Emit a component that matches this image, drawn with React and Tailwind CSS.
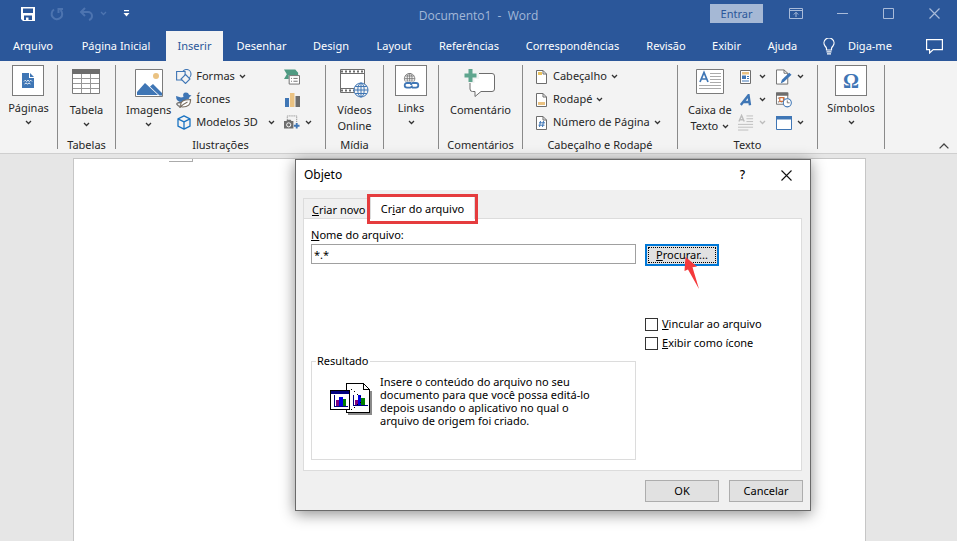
import React from 'react';

const Chevron = ({ className = 'text-[#333]' }) => (
  <svg width="7" height="5" viewBox="0 0 7 5" className={`shrink-0 ${className}`} fill="none" stroke="currentColor" strokeWidth="1.3">
    <path d="M1 1l2.5 2.5L6 1" />
  </svg>
);

/* ---------- title bar icons ---------- */

const SaveIcon = () => (
  <svg width="14" height="14" viewBox="0 0 14 14">
    <path d="M0 0h14v14H2l-2-2z" fill="#fff" />
    <path d="M2 1.500h10V6H2zM3 8.500h8V13H3z" fill="#2b579a" />
    <path d="M5 10.500h2.500V13H5z" fill="#fff" />
  </svg>
);

const RepeatIcon = () => (
  <svg width="14" height="14" viewBox="0 0 14 14" fill="none" stroke="#4d74b0" strokeWidth="2">
    <path d="M4 2.500A5.300 5.300 0 1 0 10.500 3" />
    <path d="M8.500 6V2H13" />
  </svg>
);

const UndoIcon = () => (
  <svg width="15" height="14" viewBox="0 0 15 14" fill="none" stroke="#4d74b0" strokeWidth="2">
    <path d="M6 1L2 5l4 4M2 5h7a4 4 0 0 1 4 4q0 3-3 4" />
  </svg>
);

const CustomizeIcon = () => (
  <svg width="7" height="7" viewBox="0 0 7 7" fill="#fff">
    <path d="M1 0h5v1.200H1zM0.500 3h6L3.500 6.500z" />
  </svg>
);

const RibbonOptionsIcon = () => (
  <svg width="14" height="11" viewBox="0 0 14 11" fill="none" stroke="#a9bbd9">
    <path d="M.5.5h13v10H.5zM.5 2.500h13M7 9V4.500M4.800 6.500L7 4.300l2.200 2.200" />
  </svg>
);

const BulbIcon = () => (
  <svg width="12" height="17" viewBox="0 0 12 17" fill="none" stroke="#fff" strokeWidth="1.200">
    <path d="M3.500 12V10.500Q3.500 9.500 2 8A5 5 0 1 1 10 8Q8.500 9.500 8.500 10.500V12zM3.500 13.800h5M4 15.800h4" />
  </svg>
);

const CommentIcon = () => (
  <svg width="17" height="15" viewBox="0 0 17 15" fill="none" stroke="#fff" strokeWidth="1.200">
    <path d="M.6.6h15.800v10H7.200L3.600 14v-3.400h-3z" />
  </svg>
);

/* ---------- ribbon icons ---------- */

const PagesIcon = () => (
  <svg width="12" height="15" viewBox="0 0 12 15">
    <path d="M0 0h7v5h5v10H0z" fill="#3f76b5" />
    <path d="M8 0l4 4H8z" fill="#3f76b5" />
    <path d="M2 8.500l1.300-1.300 1.300 1.300 1.400-1.300 1.400 1.300 1.300-1.300L10 8.500M2.500 11l1.500-1 1.500 1L7 10l1.500 1" fill="none" stroke="#fff" strokeWidth=".9" />
  </svg>
);

const TableIcon = () => (
  <svg width="28" height="25" viewBox="0 0 28 25">
    <path d="M.5.5h27v24H.5z" fill="#fff" stroke="#7b7b7b" />
    <path d="M0 0h28v5H0z" fill="#6d6d6d" />
    <path d="M1 9.500h26M1 14.500h26M1 19.500h26M9.500 5v19M18.500 5v19" stroke="#979797" />
  </svg>
);

const PicturesIcon = () => (
  <svg width="28" height="28" viewBox="0 0 28 28">
    <path d="M.5.5h27v27H.5z" fill="#fff" stroke="#7b7b7b" />
    <circle cx="21" cy="7" r="3" fill="#eac282" />
    <path d="M2 26v-3l8-9 13 12zM15 17.500l3-2.500 9 9v2.500h-2.500z" fill="#3f76b5" />
  </svg>
);

const ShapesIcon = () => (
  <svg width="16" height="15" viewBox="0 0 16 15" fill="#f3f3f3" stroke="#3f76b5" strokeWidth="1.100">
    <circle cx="10.500" cy="5" r="4.500" />
    <path d="M.6 2.500h8.500v8.500H.6z" />
    <path d="M9.500 5.500l4.500 4.500-4.500 4.500L5 10z" />
  </svg>
);

const BirdIcon = () => (
  <svg width="16" height="16" viewBox="0 0 16 16">
    <path d="M0 4l5 1.500L7.500 5Q6 .5 10 .5q2.500 0 3 2.300l2.500.700L13.500 5Q13.500 7 11 7.500L6 10Q0 10 0 4z" fill="#3f76b5" />
    <path d="M1 12.500q-1-2 4-2M1 12.500q1 2 4 2" fill="none" stroke="#6d6d6d" strokeWidth="1.300" />
    <path d="M5 14.500Q3 7.500 14.500 7.500 15 15 6.500 15zM3.500 16Q7 12 11.500 10" fill="#fff" stroke="#7a6f62" strokeWidth="1.200" />
  </svg>
);

const CubeIcon = () => (
  <svg width="14" height="15" viewBox="0 0 14 15" fill="none" stroke="#1a73c2" strokeWidth="1.300" strokeLinejoin="round">
    <path d="M7 .8l6 3v7.400l-6 3-6-3V3.800zM1 3.800l6 3 6-3M7 6.800v7.400" />
  </svg>
);

const SmartArtIcon = () => (
  <svg width="17" height="16" viewBox="0 0 17 16">
    <path d="M0 0h12l3 3.500V6H5v4H0l3-5z" fill="#4f9a82" />
    <path d="M5.500 6.500h11v9h-11z" fill="#fff" stroke="#6d6d6d" />
    <path d="M7.500 9.500h1M10 9.500h4.500M7.500 12.500h1M10 12.500h4.500" stroke="#6d6d6d" />
  </svg>
);

const ChartIcon = () => (
  <svg width="15" height="14" viewBox="0 0 15 14">
    <path d="M0 5h4v9H0z" fill="#3f76b5" />
    <path d="M5 0h4.500v14H5z" fill="#eac282" />
    <path d="M10.500 3H15v11h-4.500z" fill="#6d6d6d" />
  </svg>
);

const ScreenshotIcon = () => (
  <svg width="17" height="15" viewBox="0 0 17 15">
    <path d="M3.500 5V.5h10V8" fill="none" stroke="#777" strokeDasharray="1 1" />
    <path d="M0 6h2.500l1-1.500h3.500L8 6h2v8H0z" fill="#6d6d6d" />
    <circle cx="5" cy="10" r="2.200" fill="#6d6d6d" stroke="#fff" />
    <path d="M13.500 8v6M10.500 11h6" stroke="#3f76b5" strokeWidth="2" />
  </svg>
);

const Globe = ({ color }) => (
  <g fill="none" stroke={color}>
    <circle cx="7.500" cy="7.500" r="7" fill="#f3f3f3" />
    <ellipse cx="7.500" cy="7.500" rx="3.200" ry="7" />
    <path d="M.5 7.500h14M7.500.5v14M1.700 4h11.600M1.700 11h11.600" />
  </g>
);

const VideoIcon = () => (
  <svg width="29" height="29" viewBox="0 0 29 29">
    <path d="M.5.5h24v23H.5z" fill="#fff" stroke="#6d6d6d" />
    <path d="M1 2.500h23M1 21.500h23" stroke="#6d6d6d" strokeWidth="2" strokeDasharray="2 2" />
    <path d="M0 4.500h25M0 19.500h25" stroke="#6d6d6d" />
    <g transform="translate(13.500 13.500)"><Globe color="#3f76b5" /></g>
  </svg>
);

const LinksIcon = () => (
  <svg width="17" height="16" viewBox="0 0 17 16">
    <g transform="translate(1 0) scale(.75)"><Globe color="#6d6d6d" /></g>
    <path d="M1 8.500h16v7.500H1z" fill="#fff" />
    <g fill="none" stroke="#3f76b5" strokeWidth="1.800">
      <path d="M8 10H4a2.300 2.300 0 0 0 0 4.600h3q2 0 2-2" />
      <path d="M9 14.600h4a2.300 2.300 0 0 0 0-4.600h-3q-2 0-2 2" />
    </g>
  </svg>
);

const NewCommentIcon = () => (
  <svg width="32" height="29" viewBox="0 0 32 29">
    <path d="M3 4.500h25q2.500 0 2.500 2.500v13q0 2.500-2.500 2.500H17L11 27.500v-5H8.500Q6 22.500 6 20V4.500z" fill="#fff" stroke="#6d6d6d" />
    <path d="M7 0v14M0 6.500h15" stroke="#f3f3f3" strokeWidth="7" />
    <path d="M6.500 0v13M.5 6.500h12" stroke="#5fa58e" strokeWidth="4" />
  </svg>
);

const DocIcon = ({ children }) => (
  <svg width="11" height="14" viewBox="0 0 11 14">
    <path d="M.5.5H7L10.500 4v9.500H.5z" fill="#fff" stroke="#6d6d6d" />
    <path d="M7 .5V4h3.500" fill="none" stroke="#6d6d6d" />
    {children}
  </svg>
);

const TextBoxIcon = () => (
  <svg width="28" height="25" viewBox="0 0 28 25">
    <path d="M.5.5h27v24H.5z" fill="#fff" stroke="#7b7b7b" />
    <path d="M4 13L8 3.500 12 13M5.500 10h5" fill="none" stroke="#3f76b5" strokeWidth="1.700" />
    <path d="M14 4.500h11M14 7.500h11M14 10.500h11M14 13.500h11M3 16.500h22M3 19.500h22" stroke="#ababab" />
  </svg>
);

const QuickPartsIcon = () => (
  <svg width="11" height="14" viewBox="0 0 11 14">
    <path d="M.5.5h10v13H.5z" fill="#fff" stroke="#6d6d6d" />
    <path d="M2 2h7v2.500H2z" fill="#eac282" />
    <path d="M2 5.500h4v3.500H2z" fill="#3f76b5" />
    <path d="M7 6.500h2M7 8.500h2M2 11h7" stroke="#3f76b5" />
  </svg>
);

const WordArtIcon = () => (
  <svg width="12" height="12" viewBox="0 0 12 12" fill="none" stroke="#3f76b5" strokeWidth="2.400">
    <path d="M.8 11L8.500 1.200l1.500 10M3.500 8h6" />
  </svg>
);

const DropCapIcon = () => (
  <svg width="17" height="17" viewBox="0 0 17 17" fill="none" stroke="#bdbdbd">
    <path d="M1 7.500L3.800 1l2.800 6.500M2 5.500h3.600" strokeWidth="1.500" />
    <path d="M9 1.500h7M9 4.500h7M9 7.500h7M0 10.500h16M0 13.500h16M0 16.500h11" />
  </svg>
);

const SignatureIcon = () => (
  <svg width="17" height="16" viewBox="0 0 17 16">
    <path d="M.5.500h8L12.500 4v11.500H.5z" fill="#fff" stroke="#6d6d6d" />
    <path d="M8.500.5V4h4" fill="none" stroke="#6d6d6d" />
    <path d="M5 15l1.300-4L14 3.500l2.500 2L8.500 13z" fill="#3f76b5" />
  </svg>
);

const DateIcon = () => (
  <svg width="17" height="16" viewBox="0 0 17 16">
    <path d="M.5.5h12v12H.5z" fill="#fff" stroke="#6d6d6d" />
    <path d="M0 0h13v3.500H0z" fill="#6d6d6d" />
    <path d="M2 6h9M2 10h6" stroke="#888" strokeWidth="1.500" strokeDasharray="1.500 1.500" />
    <path d="M4 5.500h4v4H4z" fill="#fff" stroke="#d2703b" strokeWidth="1.300" />
    <circle cx="12" cy="11" r="4.300" fill="#fff" stroke="#3f76b5" strokeWidth="1.100" />
    <path d="M12 8.500V11h2.500" fill="none" stroke="#6d6d6d" />
  </svg>
);

const ObjectIcon = () => (
  <svg width="16" height="14" viewBox="0 0 16 14">
    <path d="M.5.5h15v13H.5z" fill="#fff" stroke="#3f76b5" />
    <path d="M0 0h16v3.500H0z" fill="#3f76b5" />
  </svg>
);

const EmbedIcon = () => (
  <svg width="42" height="32" viewBox="0 0 42 32" shapeRendering="crispEdges">
    <path d="M18 31h23V8" fill="none" stroke="#8a8a8a" strokeWidth="2" />
    <path d="M16.500.5h17l6 6v23h-23z" fill="#fff" stroke="#000" />
    <path d="M33.500.5v6h6" fill="none" stroke="#000" />
    <path d="M23.500 12v10.500h14" fill="none" stroke="#000080" />
    <path d="M25 17h3v5h-3z" fill="#800080" />
    <path d="M28 12h3v10h-3z" fill="#0000e0" />
    <path d="M31 15h4v7h-4z" fill="#008000" />
    <path d="M21 6l10 8M21 27l10-8" stroke="#000" strokeDasharray="1 3" />
    <path d="M.5 7.500h19v19H.5z" fill="#fff" stroke="#000" />
    <path d="M1 8h18v2.500H1z" fill="#000080" />
    <path d="M4.500 12v11.500h13" fill="none" stroke="#000080" />
    <path d="M6 17h3v6H6z" fill="#800080" />
    <path d="M9 14h4v9H9z" fill="#0000e0" />
    <path d="M13 16h3v7h-3z" fill="#008000" />
  </svg>
);

/* ---------- ribbon building blocks ---------- */

const Group = ({ label, width, children }) => (
  <section className={`flex shrink-0 flex-col border-r border-[#8a8a8a] ${width}`}>
    <div className="flex flex-1 justify-center">{children}</div>
    {label && <h2 className="-mb-1 h-4 text-center leading-4 whitespace-nowrap">{label}</h2>}
  </section>
);

const FramedButton = ({ label, children }) => (
  <button className="flex flex-col items-center">
    <span className="flex h-[31px] w-8 items-center justify-center border border-[#7b7b7b] bg-white">{children}</span>
    <span className="mt-1 mb-1 leading-4">{label}</span>
    <Chevron />
  </button>
);

const LargeButton = ({ label, more, children }) => (
  <button className="flex flex-col items-center pt-1">
    <span className="flex h-8 items-start">{children}</span>
    <span className="mt-px text-center leading-4 whitespace-nowrap">{label}</span>
    {more && <Chevron className="mt-1 text-[#333]" />}
  </button>
);

const SmallButton = ({ icon, label, more = true, dim }) => (
  <button className="flex h-[23px] items-center gap-1 whitespace-nowrap" aria-label={label ? undefined : 'Opção'}>
    <span className="flex w-4 justify-center">{icon}</span>
    {label}
    {more && <Chevron className={label ? 'text-[#333]' : dim ? 'ml-px text-[#bdbdbd]' : 'ml-px text-[#333]'} />}
  </button>
);

const tabs = [
  { label: 'Arquivo', width: 'w-[66px]' },
  { label: 'Página Inicial', width: 'w-[100px]' },
  { label: 'Inserir', width: 'w-[57px]', active: true },
  { label: 'Desenhar', width: 'w-[77px]' },
  { label: 'Design', width: 'w-[62px]' },
  { label: 'Layout', width: 'w-16' },
  { label: 'Referências', width: 'w-[86px]' },
  { label: 'Correspondências', width: 'w-[121px]' },
  { label: 'Revisão', width: 'w-[66px]' },
  { label: 'Exibir', width: 'w-[55px]' },
  { label: 'Ajuda', width: 'w-[57px]' },
];

const TitleBar = () => (
  <div className="grid h-[31px] grid-cols-[1fr_auto_1fr] items-center">
    <div className="flex items-center pb-1 pl-[21px]">
      <button aria-label="Salvar"><SaveIcon /></button>
      <button className="ml-[15px]" aria-label="Repetir"><RepeatIcon /></button>
      <button className="ml-[15px] flex items-center gap-[6px]" aria-label="Desfazer">
        <UndoIcon />
        <Chevron className="text-[#4d74b0]" />
      </button>
      <button className="ml-4" aria-label="Personalizar"><CustomizeIcon /></button>
    </div>
    <h1 className="font-['Open_Sans',sans-serif] text-[12px] whitespace-pre text-[#a3b7d8]">Documento1  -  Word</h1>
    <div className="flex items-center justify-end pr-[17px] pb-1">
      <button className="h-[19px] w-[53px] bg-[#a5b8d5] pt-0.5 text-[#2b579a]">Entrar</button>
      <button className="ml-[26px]" aria-label="Opções da faixa"><RibbonOptionsIcon /></button>
      <button className="ml-[34px]" aria-label="Minimizar">
        <svg width="11" height="11" viewBox="0 0 11 11" stroke="#a9bbd9"><path d="M0 5.500h11" /></svg>
      </button>
      <button className="ml-[35px]" aria-label="Maximizar">
        <svg width="11" height="11" viewBox="0 0 11 11" fill="none" stroke="#a9bbd9"><path d="M.5.5h10v10H.5z" /></svg>
      </button>
      <button className="ml-[35px]" aria-label="Fechar">
        <svg width="11" height="11" viewBox="0 0 11 11" stroke="#a9bbd9" strokeWidth="1.200"><path d="M.5.5l10 10M10.500.5l-10 10" /></svg>
      </button>
    </div>
  </div>
);

const TabStrip = () => (
  <nav className="flex h-[30px] items-stretch text-white">
    {tabs.map((tab) => (
      <button
        key={tab.label}
        className={`shrink-0 whitespace-nowrap ${tab.width} ${tab.active ? 'bg-[#f3f3f3] text-[#2b579a]' : ''}`}
      >
        {tab.label}
      </button>
    ))}
    <button className="ml-3 flex items-center gap-[13px]"><BulbIcon />Diga-me</button>
    <button className="ml-auto pr-[14px]" aria-label="Comentários"><CommentIcon /></button>
  </nav>
);

const Ribbon = () => (
  <div className="flex h-[93px] border-b border-[#cfcfcf] bg-[#f3f3f3] pt-1 pb-1 text-[#262626]">
    <Group width="w-[58px]"><FramedButton label="Páginas"><PagesIcon /></FramedButton></Group>
    <Group label="Tabelas" width="w-[58px]"><LargeButton label="Tabela" more><TableIcon /></LargeButton></Group>
    <Group label="Ilustrações" width="w-[210px]">
      <div className="flex w-full pl-[10px]">
        <LargeButton label="Imagens" more><PicturesIcon /></LargeButton>
        <div className="ml-[5px] w-[108px]">
          <SmallButton icon={<ShapesIcon />} label="Formas" />
          <SmallButton icon={<BirdIcon />} label="Ícones" more={false} />
          <button className="flex h-[23px] w-[99px] items-center gap-1 whitespace-nowrap">
            <span className="flex w-4 justify-center"><CubeIcon /></span>
            Modelos 3D
            <Chevron className="ml-auto text-[#333]" />
          </button>
        </div>
        <div>
          <SmallButton icon={<SmartArtIcon />} more={false} />
          <SmallButton icon={<ChartIcon />} more={false} />
          <SmallButton icon={<ScreenshotIcon />} />
        </div>
      </div>
    </Group>
    <Group label="Mídia" width="w-[58px]"><LargeButton label={<>Vídeos<br />Online</>}><VideoIcon /></LargeButton></Group>
    <Group width="w-[55px]"><FramedButton label="Links"><LinksIcon /></FramedButton></Group>
    <Group label="Comentários" width="w-[84px]"><LargeButton label="Comentário"><NewCommentIcon /></LargeButton></Group>
    <Group label="Cabeçalho e Rodapé" width="w-[155px]">
      <div className="w-full pl-[10px]">
        <SmallButton icon={<DocIcon><path d="M2 2h4v3H2z" fill="#eac25c" /></DocIcon>} label="Cabeçalho" />
        <SmallButton icon={<DocIcon><path d="M2 9h7v3H2z" fill="#eac282" /></DocIcon>} label="Rodapé" />
        <SmallButton icon={<DocIcon><path d="M4.500 5l-1 6M7.500 5l-1 6M3 6.800h6M2.500 9.200h6" stroke="#3f76b5" /></DocIcon>} label="Número de Página" />
      </div>
    </Group>
    <Group label="Texto" width="w-[140px]">
      <div className="flex w-full pl-[10px]">
        <LargeButton label={<>Caixa de<br /><span className="inline-flex items-center gap-1">Texto <Chevron /></span></>}><TextBoxIcon /></LargeButton>
        <div className="ml-[6px]">
          <SmallButton icon={<QuickPartsIcon />} />
          <SmallButton icon={<WordArtIcon />} />
          <SmallButton icon={<DropCapIcon />} dim />
        </div>
        <div className="ml-[10px]">
          <SmallButton icon={<SignatureIcon />} />
          <SmallButton icon={<DateIcon />} more={false} />
          <SmallButton icon={<ObjectIcon />} />
        </div>
      </div>
    </Group>
    <Group width="w-[67px]">
      <FramedButton label="Símbolos">
        <span className="font-['Liberation_Serif',serif] text-xl leading-5 font-bold text-[#3f76b5]">Ω</span>
      </FramedButton>
    </Group>
    <button className="mr-2 ml-auto self-end" aria-label="Recolher">
      <svg width="10" height="6" viewBox="0 0 10 6" fill="none" stroke="#444" strokeWidth="1.300"><path d="M.6 5.400L5 1l4.400 4.400" /></svg>
    </button>
  </div>
);

const ObjectDialog = () => (
  <div role="dialog" aria-label="Objeto" className="absolute top-[5px] left-[295px] w-[516px] border border-[#6a6a6a] bg-[#f0f0f0] text-[11px] text-black shadow-[0_3px_14px_rgba(0,0,0,0.45)]">
    <header className="flex h-[30px] items-center bg-white pr-[18px] pl-2">
      <h2 className="text-[12px]">Objeto</h2>
      <button className="ml-auto text-[12px] font-medium" aria-label="Ajuda da janela">?</button>
      <button className="ml-9" aria-label="Fechar janela">
        <svg width="11" height="11" viewBox="0 0 11 11" stroke="#111" strokeWidth="1.100"><path d="M.5.5l10 10M10.500.5l-10 10" /></svg>
      </button>
    </header>

    <div className="px-[7px] pb-2">
      <div className="flex h-7 items-end" role="tablist">
        <button role="tab" className="h-5 w-[67px] border-t border-l border-[#dcdcdc] pt-0.5 pl-2 text-left leading-4 whitespace-nowrap"><u>C</u>riar novo</button>
        <button role="tab" aria-selected="true" className="relative -mb-px h-[23px] w-[105px] border border-b-0 border-[#dcdcdc] bg-white pt-0.5 whitespace-nowrap">
          Cr<u>i</u>ar do arquivo
          <span className="absolute -inset-x-1 -top-[3px] -bottom-[5px] border-[3px] border-[#e53c3e]" />
        </button>
      </div>

      <div className="mr-px flex h-[253px] items-start border border-[#dcdcdc] bg-white pt-2 pl-[7px]">
        <div className="w-[325px]">
          <label htmlFor="file-name" className="block h-[17px] leading-4"><u>N</u>ome do arquivo:</label>
          <input id="file-name" defaultValue="*.*" className="block h-5 w-full border border-[#a0a0a0] px-[2px]" />
          <fieldset className="mt-[89px] h-[107px] border border-[#dcdcdc] pl-[18px]">
            <legend className="-ml-[14px] px-px leading-4">Resultado</legend>
            <div className="flex gap-2">
              <div className="mt-[14px]"><EmbedIcon /></div>
              <p className="mt-[6px] leading-[13px] whitespace-nowrap">
                Insere o conteúdo do arquivo no seu<br />
                documento para que você possa editá-lo<br />
                depois usando o aplicativo no qual o<br />
                arquivo de origem foi criado.
              </p>
            </div>
          </fieldset>
        </div>
        <div className="ml-[9px] pt-[17px]">
          <button className="relative h-[22px] w-[74px] border-2 border-[#0078d7] bg-[#e1e1e1] p-px">
            <span className="flex h-full items-center justify-center border border-dotted border-black"><span><u>P</u>rocurar...</span></span>
            <svg className="absolute top-[11px] left-[36px]" width="17" height="33" viewBox="0 0 17 33" fill="#f4393b">
              <path d="M2.500 0L14 9.500l-4.500.8L16 32 5 12.500 1.500 14z" />
            </svg>
          </button>
          <label className="mt-[49px] flex h-[19px] items-center gap-1">
            <input type="checkbox" className="size-[13px] appearance-none border border-[#333] bg-white" />
            <span><u>V</u>incular ao arquivo</span>
          </label>
          <label className="flex h-[19px] items-center gap-1">
            <input type="checkbox" className="size-[13px] appearance-none border border-[#333] bg-white" />
            <span><u>E</u>xibir como ícone</span>
          </label>
        </div>
      </div>

      <div className="mt-[9px] flex justify-end gap-[10px]">
        <button className="h-[22px] w-[74px] border border-[#adadad] bg-[#e1e1e1]">OK</button>
        <button className="h-[22px] w-[74px] border border-[#adadad] bg-[#e1e1e1]">Cancelar</button>
      </div>
    </div>
  </div>
);

const App = () => (
  <div className="flex h-screen flex-col overflow-hidden bg-[#e6e6e6] font-['Noto_Sans',sans-serif] text-[11px]">
    <header className="shrink-0 bg-[#2b579a]">
      <TitleBar />
      <TabStrip />
    </header>
    <Ribbon />
    <main className="relative flex-1 pt-1">
      <div className="mr-[91px] ml-[73px] h-full border border-b-0 border-[#c6c6c6] bg-white">
        <div className="ml-[95px] h-[3px] w-6 border-r border-b border-[#ababab]" />
      </div>
      <ObjectDialog />
    </main>
  </div>
);

export default App;
